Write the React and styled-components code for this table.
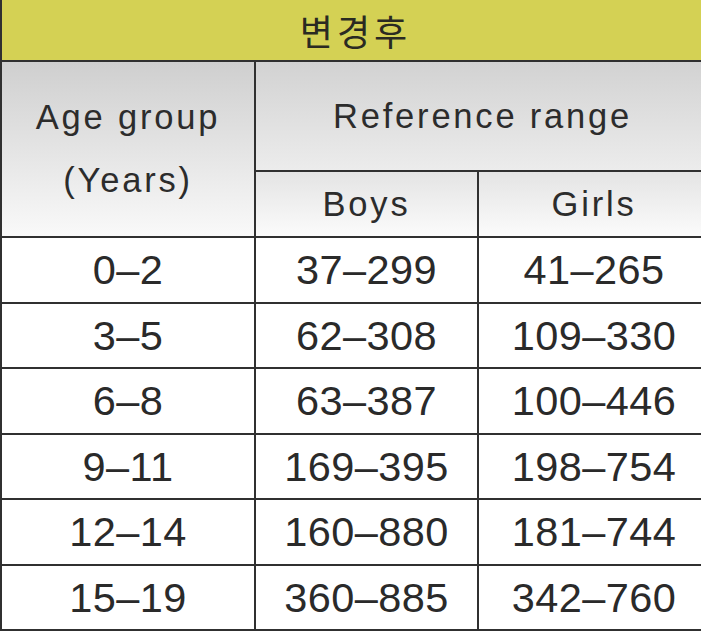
import React from 'react'
import styled, { createGlobalStyle } from 'styled-components'

const GlobalStyle = createGlobalStyle`
  html, body {
    margin: 0;
    padding: 0;
    background: #ffffff;
  }
  body {
    width: 701px;
    height: 632px;
    overflow: hidden;
  }
`

const Wrap = styled.div`
  width: 701px;
  height: 632px;
  overflow: hidden;
  background: #ffffff;
`

const Table = styled.table`
  width: 709px;
  table-layout: fixed;
  border-collapse: collapse;
  font-family: "Liberation Sans", "Noto Sans CJK KR", sans-serif;
  color: #1e1e1e;
`

const Cell = styled.td`
  border: 2px solid #303030;
  padding: 0;
  text-align: center;
  vertical-align: middle;
`

const TitleCell = styled(Cell)`
  border-top: none;
  background: #d4d154;
  font-family: "Noto Sans CJK KR", sans-serif;
  font-size: 36px;
  letter-spacing: 4px;
  color: #2a2a22;
`

const HeadCell = styled(Cell)`
  background: linear-gradient(to bottom, ${p => p.$from}, ${p => p.$to});
  font-size: 34.5px;
  letter-spacing: 2.8px;
  line-height: ${p => p.$lh || '40px'};
  color: #2c2c2c;
`

const DataCell = styled(Cell)`
  font-size: 41.5px;
  letter-spacing: 0.4px;
  background: #ffffff;
  color: #2a2a2a;
`

const Row = styled.tr`
  height: ${p => p.$h}px;
`

const rows = [
  ['0\u20132', '37\u2013299', '41\u2013265'],
  ['3\u20135', '62\u2013308', '109\u2013330'],
  ['6\u20138', '63\u2013387', '100\u2013446'],
  ['9\u201311', '169\u2013395', '198\u2013754'],
  ['12\u201314', '160\u2013880', '181\u2013744'],
  ['15\u201319', '360\u2013885', '342\u2013760'],
]

export default function App() {
  return (
    <Wrap>
      <GlobalStyle />
      <Table>
        <colgroup>
          <col style={{ width: 254 }} />
          <col style={{ width: 223 }} />
          <col style={{ width: 232 }} />
        </colgroup>
        <tbody>
          <Row $h={61}>
            <TitleCell colSpan={3}>변경후</TitleCell>
          </Row>
          <Row $h={110}>
            <HeadCell rowSpan={2} $from="#cfcfcf" $to="#f9f9f9" $lh="63px">
              Age group<br />(Years)
            </HeadCell>
            <HeadCell colSpan={2} $from="#d2d2d2" $to="#ececec">
              Reference range
            </HeadCell>
          </Row>
          <Row $h={66}>
            <HeadCell $from="#e4e4e4" $to="#fbfbfb">Boys</HeadCell>
            <HeadCell $from="#e4e4e4" $to="#fbfbfb">Girls</HeadCell>
          </Row>
          {rows.map((r, i) => (
            <Row key={i} $h={i % 2 ? 65 : 66}>
              {r.map((v, j) => (
                <DataCell key={j}>{v}</DataCell>
              ))}
            </Row>
          ))}
        </tbody>
      </Table>
    </Wrap>
  )
}
